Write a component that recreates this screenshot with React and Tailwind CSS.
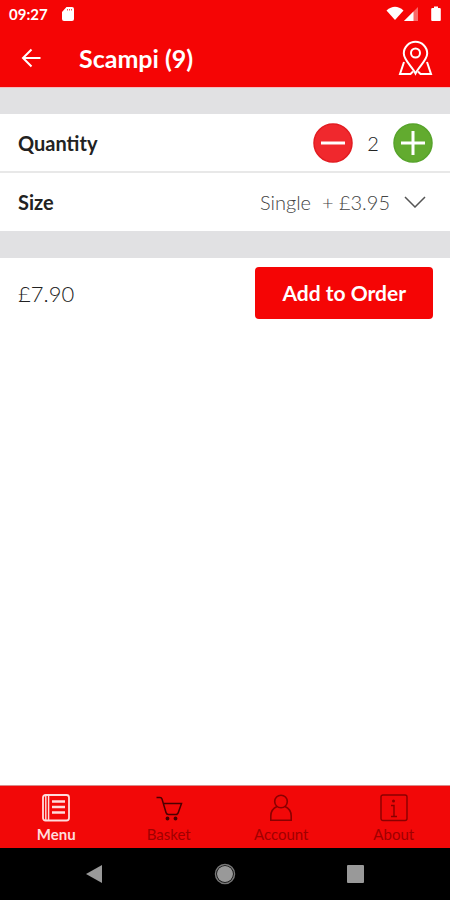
import { useState } from "react";

function StatusBar() {
  return (
    <div className="flex h-7 items-center justify-between pr-2 pl-[9px] text-white">
      <div className="flex items-center gap-3">
        <span className="text-[15px] leading-5 font-bold">09:27</span>
        <svg className="h-4 w-4" viewBox="0 0 16 16" fill="currentColor" aria-hidden="true">
          <path d="M6.500 1H12q2 0 2 2v10q0 2-2 2H4q-2 0-2-2V6z" />
          <path d="M7.500 3v1.500M9.500 3v1.500M11.500 3v1.500" stroke="#f50505" strokeWidth=".7" />
        </svg>
      </div>
      <div className="flex items-center">
        <svg className="h-4 w-10" viewBox="0 0 40 16" fill="currentColor" aria-hidden="true">
          <path d="M.5 4.500Q9-3 17.500 4.500L9 14z" />
          <path d="M32 1v14H18z" opacity=".4" />
          <path d="M27.500 5.500V15H18z" />
        </svg>
        <svg className="ml-1 h-4 w-3" viewBox="0 0 12 16" fill="currentColor" aria-hidden="true">
          <path d="M4 .5h4v1.500h1.500q1.300 0 1.300 1V14q0 1-1 1H2.200q-1 0-1-1V3q0-1 1.300-1H4z" />
        </svg>
      </div>
    </div>
  );
}

function MapIcon() {
  return (
    <svg className="h-9 w-9" viewBox="0 0 36 36" fill="none" stroke="currentColor" strokeWidth="2" aria-hidden="true">
      <path d="M17.500 33.500C14 26.500 5.800 20 5.800 13.500a11.700 11.700 0 0 1 23.400 0C29.200 20 21 26.500 17.500 33.500z" />
      <circle cx="17.500" cy="13" r="4.500" />
      <path d="M6 22L2 34h10.500l2.500-2.500M29 22l4 12H22.500L20 31.500" />
    </svg>
  );
}

function MenuIcon() {
  return (
    <svg className="h-7 w-7" viewBox="0 0 28 28" fill="none" stroke="currentColor" strokeWidth="1.800" aria-hidden="true">
      <rect x="1" y="1" width="26" height="25.500" rx="2.500" />
      <path d="M3.800 1v25M6.600 1v25" strokeWidth="1.400" />
      <path d="M10 7.500h13M10 13h13M10 18.500h13" strokeWidth="2.500" />
    </svg>
  );
}

function BasketIcon() {
  return (
    <svg className="h-7 w-7" viewBox="0 0 28 28" fill="none" stroke="currentColor" strokeWidth="1.500" aria-hidden="true">
      <path d="M1.500 3.500h3.500q1.500 0 2 1.500l4 13.500q.5 2 2.500 2H22.500M8 9.500h18.500l-3 8.500q-.7 2.500-2.500 2.500" />
      <circle cx="12.500" cy="24.500" r="1.200" fill="currentColor" />
      <circle cx="20.500" cy="24.500" r="1.200" fill="currentColor" />
    </svg>
  );
}

function AccountIcon() {
  return (
    <svg className="h-7 w-7" viewBox="0 0 28 28" fill="none" stroke="currentColor" strokeWidth="1.600" aria-hidden="true">
      <circle cx="14" cy="7.500" r="6.300" />
      <path d="M10 12.500C5.500 14.500 3.800 18 3.800 22v4.300h20.400V22c0-4-1.700-7.500-6.200-9.500" />
    </svg>
  );
}

function AboutIcon() {
  return (
    <svg className="h-7 w-7" viewBox="0 0 28 28" fill="none" stroke="currentColor" strokeWidth="1.400" aria-hidden="true">
      <rect x="1" y="1" width="26" height="25.500" rx="2" />
      <circle cx="13.500" cy="7" r="1.500" fill="currentColor" stroke="none" />
      <path d="M11 11.500h3v11M11 22.500h6" />
    </svg>
  );
}

const tabs = [
  { name: "Menu", Icon: MenuIcon, color: "font-bold text-[#ffdcdc]" },
  { name: "Basket", Icon: BasketIcon, color: "text-[#a00000]", iconColor: "text-[#4a0000]" },
  { name: "Account", Icon: AccountIcon, color: "text-[#a00000]", iconColor: "text-[#8a0000]" },
  { name: "About", Icon: AboutIcon, color: "text-[#a00000]", iconColor: "text-[#8a0000]" },
];

export default function App() {
  const [quantity, setQuantity] = useState(2);
  return (
    <div className="flex min-h-screen flex-col bg-white font-['Lato','Liberation_Sans',sans-serif] text-[#222]">
      <header className="bg-[#f50505] text-white">
        <StatusBar />
        <div className="flex h-[59px] items-center pr-4 pl-[21px]">
          <button type="button" aria-label="Back">
            <svg className="h-5 w-5" viewBox="0 0 20 20" fill="none" stroke="currentColor" strokeWidth="2" aria-hidden="true">
              <path d="M19.500 10H2M10.500 1.500L2 10l8.500 8.500" />
            </svg>
          </button>
          <h1 className="ml-[38px] flex-1 text-[25px] leading-8 font-bold">Scampi (9)</h1>
          <button type="button" aria-label="Find us"><MapIcon /></button>
        </div>
      </header>

      <main className="flex-1">
        <div className="h-[27px] border-t border-[#f3bcbe] bg-[#e1e1e3]" />
        <div className="flex h-[59px] items-center justify-between border-b-2 border-[#e8e8e8] pr-[17px] pl-[18px]">
          <span className="text-xl font-bold">Quantity</span>
          <div className="flex items-center">
            <button type="button" aria-label="Decrease quantity" className="text-[#f0282d]" onClick={() => setQuantity(Math.max(1, quantity - 1))}>
              <svg className="h-10 w-10" viewBox="0 0 40 40" aria-hidden="true">
                <circle cx="20" cy="20" r="19" fill="currentColor" stroke="#e21b20" strokeWidth="1.500" />
                <path d="M8 20h24" stroke="white" strokeWidth="3" />
              </svg>
            </button>
            <output className="w-10 text-center text-xl font-light">{quantity}</output>
            <button type="button" aria-label="Increase quantity" className="text-[#62ab2f]" onClick={() => setQuantity(quantity + 1)}>
              <svg className="h-10 w-10" viewBox="0 0 40 40" aria-hidden="true">
                <circle cx="20" cy="20" r="19" fill="currentColor" stroke="#56a32a" strokeWidth="1.500" />
                <path d="M8 20h24M20 8v24" stroke="white" strokeWidth="3" />
              </svg>
            </button>
          </div>
        </div>
        <div className="flex h-[58px] items-center justify-between pr-6 pl-[18px]">
          <label htmlFor="size" className="text-xl font-bold">Size</label>
          <div className="flex items-center gap-[14px]">
            <select id="size" className="appearance-none bg-transparent text-right text-xl font-light text-[#444] [field-sizing:content]">
              <option>{"Single\u00a0 + £3.95"}</option>
            </select>
            <svg className="h-3 w-[22px]" viewBox="0 0 22 12" fill="none" stroke="#555" strokeWidth="1.500" aria-hidden="true">
              <path d="M1 1l10 10L21 1" />
            </svg>
          </div>
        </div>
        <div className="h-[27px] bg-[#e1e1e3]" />
        <div className="flex items-center justify-between pt-[9px] pr-[17px] pl-[18px]">
          <span className="text-[22px] font-light">£7.90</span>
          <button type="button" className="h-[52px] rounded-sm bg-[#f50505] px-[27px] text-[21px] font-bold text-white">
            Add to Order
          </button>
        </div>
      </main>

      <nav className="grid h-[63px] grid-cols-4 border-t border-[#d98a8a] bg-[#f20808]">
        {tabs.map(({ name, Icon, color, iconColor }) => (
          <button key={name} type="button" className={`flex flex-col items-center pt-2 text-[15px] leading-6 ${color}`}>
            <span className={iconColor}><Icon /></span>
            {name}
          </button>
        ))}
      </nav>

      <div className="flex h-[52px] items-center justify-between bg-black px-[84px] text-[#999]">
        <button type="button" aria-label="System back">
          <svg className="h-5 w-5" viewBox="0 0 20 20" fill="currentColor" aria-hidden="true"><path d="M2 10L18 1v18z" /></svg>
        </button>
        <button type="button" aria-label="Home">
          <svg className="h-6 w-6" viewBox="0 0 24 24" aria-hidden="true">
            <circle cx="12" cy="12" r="9.500" fill="none" stroke="#777" strokeWidth="1.500" />
            <circle cx="12" cy="12" r="8" fill="currentColor" />
          </svg>
        </button>
        <button type="button" aria-label="Recent apps">
          <svg className="h-5 w-5" viewBox="0 0 20 20" fill="currentColor" aria-hidden="true"><rect x="1" y="1" width="17" height="18" rx="1" /></svg>
        </button>
      </div>
    </div>
  );
}
